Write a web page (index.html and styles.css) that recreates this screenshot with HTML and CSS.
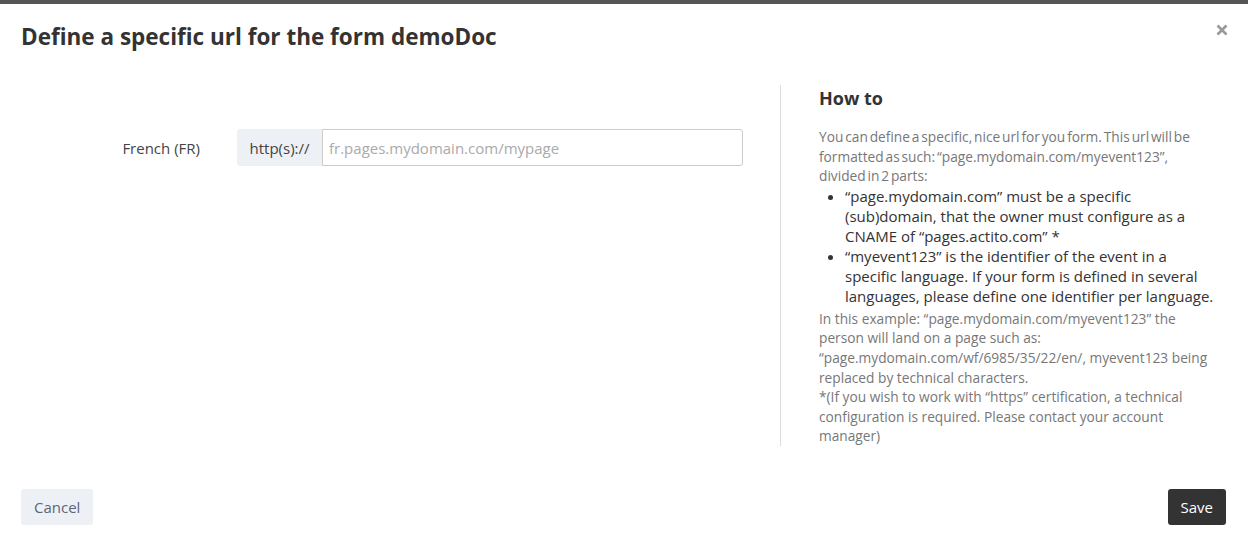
FILE: index.html
```html
<!DOCTYPE html>
<html lang="en">
<head>
<meta charset="utf-8">
<title>Define a specific url</title>
<link rel="stylesheet" href="styles.css">
</head>
<body>
<div class="modal">
  <div class="modal-header">
    <h1 class="modal-title">Define a specific url for the form demoDoc</h1>
    <button class="close" aria-label="Close">
      <svg width="12" height="12" viewBox="0 0 12 12"><path d="M1.5 1.5 L10.5 10.5 M10.5 1.5 L1.5 10.5" stroke="#999" stroke-width="2.6" stroke-linecap="butt"/></svg>
    </button>
  </div>
  <div class="modal-body">
    <div class="form-col">
      <div class="form-row">
        <label class="form-label">French (FR)</label>
        <div class="input-group">
          <span class="addon">http(s)://</span>
          <input class="input" type="text" placeholder="fr.pages.mydomain.com/mypage">
        </div>
      </div>
    </div>
    <div class="help-col">
      <h2 class="help-title">How to</h2>
      <p class="help-text help-intro">You can define a specific, nice url for you form. This url will be formatted as such: “page.mydomain.com/myevent123”,<br>divided in 2 parts:</p>
      <ul class="help-list">
        <li>“page.mydomain.com” must be a specific (sub)domain, that the owner must configure as a CNAME of “pages.actito.com” *</li>
        <li>“myevent123” is the identifier of the event in a specific language. If your form is defined in several languages, please define one identifier per language.</li>
      </ul>
      <p class="help-text">In this example: “page.mydomain.com/myevent123” the person will land on a page such as: “page.mydomain.com/wf/6985/35/22/en/, myevent123 being replaced by technical characters.</p>
      <p class="help-text">*(If you wish to work with “https” certification, a technical configuration is required. Please contact your account manager)</p>
    </div>
  </div>
  <div class="modal-footer">
    <button class="btn btn-cancel">Cancel</button>
    <button class="btn btn-save">Save</button>
  </div>
</div>
</body>
</html>
```
FILE: styles.css
```css
* { box-sizing: border-box; }
html, body { margin: 0; padding: 0; background: #fff; }
body { font-family: "Open Sans", "Liberation Sans", sans-serif; color: #333; }

.modal { border-top: 4px solid #555; }

.modal-header {
  display: flex;
  justify-content: space-between;
  align-items: flex-start;
  padding: 18px 21px 33px 21px;
}
.modal-title {
  margin: 0;
  font-size: 22.5px;
  line-height: 30px;
  font-weight: 700;
  color: #333;
}
.close {
  border: 0;
  background: none;
  padding: 0;
  margin-top: 2px;
  margin-right: -1px;
  width: 12px;
  height: 12px;
  cursor: pointer;
  display: flex;
}

.modal-body { display: flex; }

.form-col {
  width: 781px;
  border-right: 1px solid #ddd;
  padding: 44px 37px 0 21px;
}
.form-row { display: flex; align-items: center; }
.form-label {
  width: 179px;
  text-align: right;
  font-size: 15px;
  color: #444;
  margin-right: 37px;
}
.input-group { flex: 1; display: flex; height: 37px; }
.addon {
  width: 85px;
  background: #edf0f4;
  border-radius: 3px 0 0 3px;
  display: flex;
  align-items: center;
  justify-content: center;
  font-size: 15px;
  color: #444;
}
.input {
  flex: 1;
  min-width: 0;
  border: 1px solid #ccc;
  border-radius: 0 3px 3px 0;
  padding: 0 6px;
  font-family: inherit;
  font-size: 15px;
  color: #333;
  outline: none;
}
.input::placeholder { color: #aaa; }

.help-col {
  width: 467px;
  padding: 1px 32px 0 38px;
}
.help-title {
  margin: 0 0 17px 0;
  font-size: 18px;
  line-height: 24px;
  font-weight: 700;
  color: #333;
}
.help-text {
  margin: 0;
  font-size: 13.72px;
  line-height: 19.6px;
  color: #777;
}
.help-intro { word-spacing: -1.7px; }
.help-list {
  margin: 0 0 3px 0;
  padding-left: 26px;
  font-size: 15px;
  line-height: 20px;
  color: #333;
}

.modal-footer {
  display: flex;
  justify-content: space-between;
  padding: 43px 22px 0 21px;
}
.btn {
  height: 36px;
  border: 0;
  border-radius: 3px;
  font-family: inherit;
  font-size: 15px;
  padding: 0 13px;
  cursor: pointer;
}
.btn-cancel { background: #edf0f4; color: #5b6778; }
.btn-save { background: #333; color: #fff; }
```
